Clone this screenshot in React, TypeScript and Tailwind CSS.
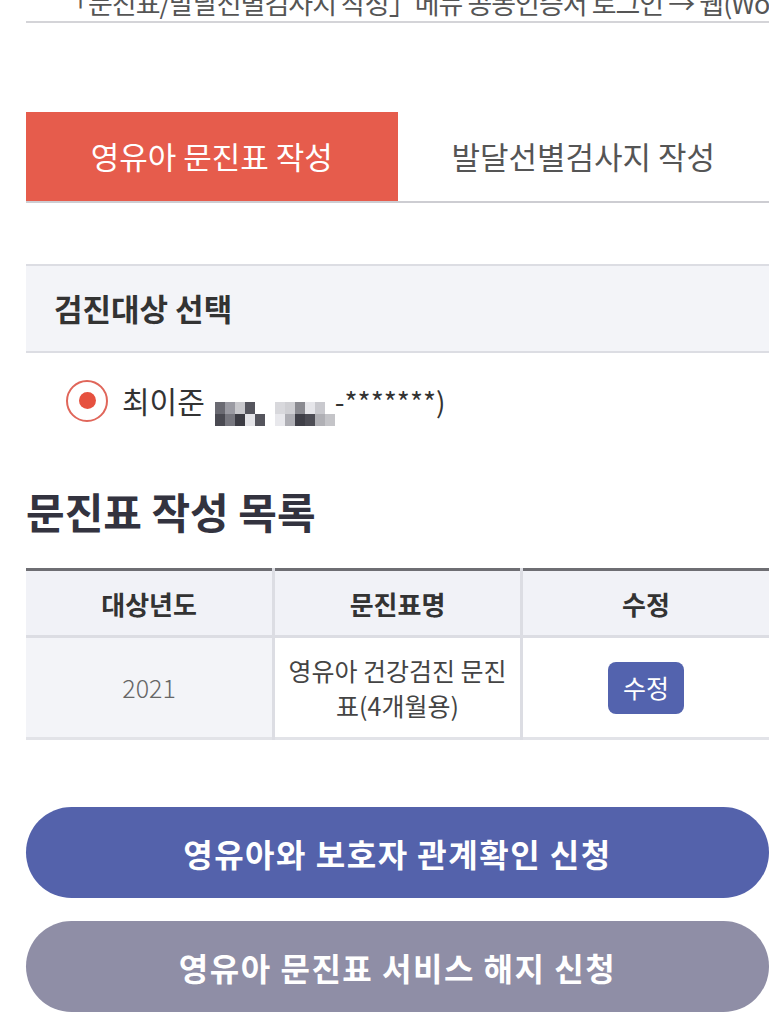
import { useState } from "react";

const font = { fontFamily: '"Noto Sans CJK KR", "Noto Sans", sans-serif' };

function Pixelated() {
  // blurred personal info, drawn as mosaic blocks
  const cells = [
    ["#6a6a72", "#9a9aa2", "#c8c8cc", "#55555d", "#ffffff"],
    ["#4a4a52", "#77777f", "#3c3c44", "#e4e4e8", "#55555d"],
  ];
  const cells2 = [
    ["#d8d8dc", "#cfcfd3", "#8a8a90", "#e6e6ea", "#c9c9ce", "#ffffff"],
    ["#e8e8ec", "#aeaeb4", "#3f3f47", "#4d4d55", "#b0b0b5", "#c4c4c8"],
  ];
  return (
    <span className="inline-flex items-center gap-[10px]">
      {[cells, cells2].map((grid, g) => (
        <span key={g} className="inline-flex flex-col">
          {grid.map((row, i) => (
            <span key={i} className="flex">
              {row.map((c, j) => (
                <span key={j} className="w-[10px] h-[12px]" style={{ background: c }} />
              ))}
            </span>
          ))}
        </span>
      ))}
    </span>
  );
}

export default function App() {
  const [tab, setTab] = useState(0);
  const [selected, setSelected] = useState(true);

  return (
    <div className="bg-white min-h-[1022px] pl-[26px] pr-[4px] text-[#333]" style={font}>
      {/* clipped notice */}
      <div className="h-[23px] overflow-hidden border-b-2 border-[#d4d4d8]">
        <p className="-mt-[11px] pl-[36px] text-[27px] leading-[28px] tracking-[-1px] text-[#555] whitespace-nowrap">
          「문진표/발달선별검사지 작성」메뉴 공동인증서 로그인 → 웹(Wo
        </p>
      </div>

      {/* tabs */}
      <div className="mt-[89px] flex border-b-2 border-[#cdcdd2]">
        {["영유아 문진표 작성", "발달선별검사지 작성"].map((t, i) => (
          <button
            key={t}
            onClick={() => setTab(i)}
            className={`flex-1 h-[89px] text-[31px] ${
              tab === i ? "bg-[#e65c4c] text-white" : "bg-white text-[#555]"
            }`}
          >
            {t}
          </button>
        ))}
      </div>

      {/* target selection */}
      <div className="mt-[61px] h-[89px] bg-[#f3f4f8] border-y-2 border-[#dcdde3] flex items-center pl-[28px]">
        <h2 className="text-[31px] font-bold text-[#333]">검진대상 선택</h2>
      </div>
      <label className="mt-[22px] ml-[40px] flex items-center gap-[14px] cursor-pointer" onClick={() => setSelected(!selected)}>
        <span className="w-[42px] h-[42px] rounded-full border-2 border-[#e0665a] flex items-center justify-center">
          {selected && <span className="w-[17px] h-[17px] rounded-full bg-[#e6513f]" />}
        </span>
        <span className="flex items-center text-[30px] text-[#333]">
          <span>최이준</span>
          <span className="ml-[10px] mt-[4px]">
            <Pixelated />
          </span>
          <span className="text-[28px]">-*******)</span>
        </span>
      </label>

      {/* list */}
      <h1 className="mt-[54px] text-[42px] font-bold text-[#33333f] leading-[62px]">문진표 작성 목록</h1>

      <table className="mt-[26px] w-full border-collapse border-t-[3px] border-[#6e6e73] table-fixed">
        <thead>
          <tr className="bg-[#f1f2f7] h-[67px]">
            <th className="text-[26px] font-bold text-[#333] border-r-[3px] border-b-[3px] border-[#dcdde3]">대상년도</th>
            <th className="text-[26px] font-bold text-[#333] border-r-[3px] border-b-[3px] border-[#dcdde3]">문진표명</th>
            <th className="text-[26px] font-bold text-[#333] border-b-[3px] border-[#dcdde3]">수정</th>
          </tr>
        </thead>
        <tbody>
          <tr className="h-[102px] border-b-[3px] border-[#e2e3e8]">
            <td className="bg-[#f3f4f8] text-center text-[25px] text-[#666] font-light border-r-[3px] border-[#dcdde3]">2021</td>
            <td className="text-center text-[25px] leading-[35px] text-[#444] px-[8px] border-r-[3px] border-[#dcdde3]">
              영유아 건강검진 문진
              <br />
              표(4개월용)
            </td>
            <td className="text-center">
              <button className="w-[76px] h-[52px] rounded-[8px] bg-[#5363ae] text-white text-[25px]">수정</button>
            </td>
          </tr>
        </tbody>
      </table>

      {/* actions */}
      <div className="mt-[67px] flex flex-col gap-[23px]">
        <button className="h-[91px] rounded-full bg-[#5462ab] text-white text-[32px] font-bold tracking-[1.5px]">
          영유아와 보호자 관계확인 신청
        </button>
        <button className="h-[91px] rounded-full bg-[#8f8ea6] text-white text-[32px] font-bold tracking-[1.5px]">
          영유아 문진표 서비스 해지 신청
        </button>
      </div>
    </div>
  );
}
